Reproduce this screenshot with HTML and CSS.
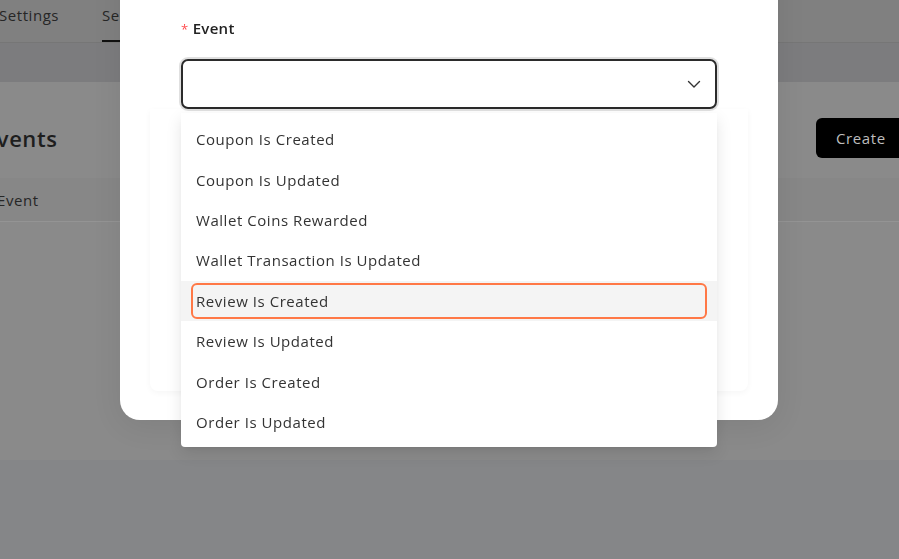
FILE: index.html
```html
<!DOCTYPE html>
<html lang="en">

<head>
    <meta charset="UTF-8">
    <meta name="viewport" content="width=device-width, initial-scale=1.0">
    <title>Webhook Events</title>
    <link rel="stylesheet" href="styles.css">
</head>

<body>
    <div class="page">
        <nav class="tabs">
            <span class="tab">Settings</span>
            <span class="tab active">Security</span>
        </nav>
        <div class="band"></div>
        <main class="content">
            <header class="content-head">
                <h1>Events</h1>
                <button class="create-button">Create</button>
            </header>
            <div class="table-head">
                <span>Event</span>
            </div>
        </main>
        <div class="footer-area"></div>
    </div>

    <div class="modal">
        <label class="field-label"><span class="required">*</span> Event</label>
        <div class="select">
            <svg class="chevron" width="14" height="14" viewBox="0 0 14 14" fill="none">
                <path d="M1.5 4.5 7 10l5.5-5.5" stroke="#333" stroke-width="1.4" stroke-linecap="round" stroke-linejoin="round" />
            </svg>
        </div>
        <div class="modal-body"></div>

        <ul class="dropdown">
            <li class="option">Coupon Is Created</li>
            <li class="option">Coupon Is Updated</li>
            <li class="option">Wallet Coins Rewarded</li>
            <li class="option">Wallet Transaction Is Updated</li>
            <li class="option active">Review Is Created</li>
            <li class="option">Review Is Updated</li>
            <li class="option">Order Is Created</li>
            <li class="option">Order Is Updated</li>
        </ul>
    </div>
</body>

</html>
```

FILE: styles.css
```css
*,
*::after,
*::before {
    box-sizing: border-box;
}

body {
    font-family: "Open Sans", "Noto Sans", sans-serif;
    letter-spacing: .55px;
    margin: 0;
    width: 899px;
    height: 559px;
    overflow: hidden;
    color: #333;
}

/* dimmed page behind the modal */
.page {
    display: flex;
    flex-direction: column;
    height: 559px;
    background: #858688;

    .tabs {
        display: flex;
        gap: 43px;
        height: 43px;
        background: #808080;
        border-bottom: 1px solid #767676;
        margin-left: -1px;

        .tab {
            font-size: 15px;
            line-height: 30px;
            color: #262626;
            padding-bottom: 10px;
        }

        .active {
            border-bottom: 2px solid #111;
            padding-bottom: 8px;
        }
    }

    .band {
        height: 39px;
        background: #7c7c7e;
    }

    .content {
        height: 378px;
        background: #8a8a8a;

        .content-head {
            display: flex;
            justify-content: space-between;
            align-items: center;
            height: 96px;
            padding: 16px 0 0;

            h1 {
                margin: 0 0 0 -16px;
                font-size: 22px;
                font-weight: 600;
                color: #1e1e1e;
            }

            .create-button {
                margin-right: -20px;
                background: #000;
                color: #bdbdbd;
                border: 0;
                border-radius: 6px;
                font-family: inherit;
                letter-spacing: .6px;
                font-size: 15px;
                width: 103px;
                height: 40px;
                text-align: left;
                padding: 0 0 0 20px;
            }
        }

        .table-head {
            height: 44px;
            display: flex;
            align-items: center;
            border-bottom: 1px solid #949494;
            background: #878787;

            span {
                margin-left: -3px;
                font-size: 15px;
                color: #262626;
            }
        }
    }

    .footer-area {
        flex: 1;
    }
}

.modal {
    position: fixed;
    left: 120px;
    top: -40px;
    width: 658px;
    height: 460px;
    background: #fff;
    border-radius: 20px;
    padding: 58px 61px 0;
    box-shadow: 0 6px 30px rgba(0, 0, 0, .08);

    .field-label {
        display: block;
        font-size: 15px;
        font-weight: 600;
        line-height: 20px;
        color: #222;
        letter-spacing: .3px;

        .required {
            color: #ff4d4f;
            font-size: 13px;
            font-weight: 400;
        }
    }

    .select {
        margin-top: 20px;
        height: 50px;
        border: 2px solid #2b2b2b;
        border-radius: 7px;
        display: flex;
        align-items: center;
        justify-content: flex-end;
        padding-right: 14px;
        box-shadow: 0 0 0 2px rgba(0, 0, 0, .12);
    }

    .modal-body {
        margin: 0 -31px;
        height: 282px;
        border-radius: 0 0 8px 8px;
        box-shadow: 0 2px 6px rgba(0, 0, 0, .04);
    }
}

.dropdown {
    position: absolute;
    left: 61px;
    top: 153px;
    width: 536px;
    margin: 0;
    padding: 6px 0 5px;
    list-style: none;
    background: #fff;
    border-radius: 0 0 4px 4px;
    box-shadow: 0 6px 16px rgba(0, 0, 0, .1), 0 3px 6px -4px rgba(0, 0, 0, .14);

    .option {
        position: relative;
        height: 40.4px;
        display: flex;
        align-items: center;
        padding: 0 15px;
        font-size: 15px;
        color: #333;
    }

    .active {
        background: #f4f4f4;

        &::after {
            content: "";
            position: absolute;
            inset: 2px 10px;
            border: 2px solid #ff7846;
            border-radius: 6px;
        }
    }
}
```
